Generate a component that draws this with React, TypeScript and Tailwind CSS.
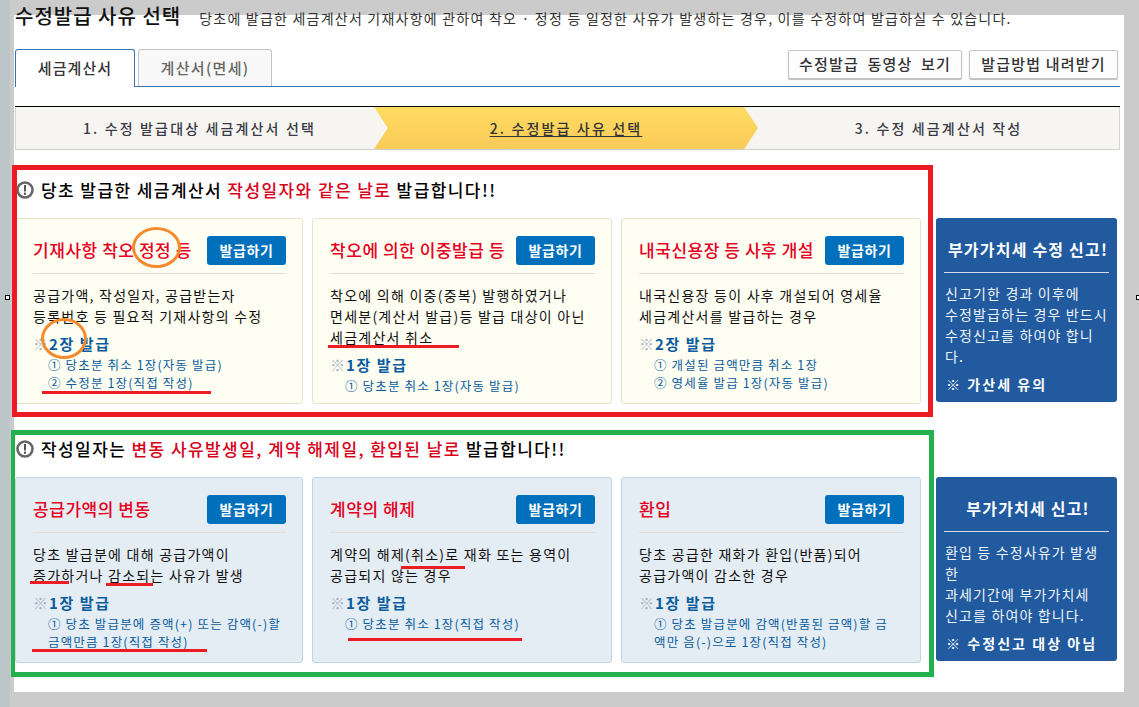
import React from "react";

const font = "font-['Noto_Sans_CJK_KR','Noto_Sans',sans-serif]";

function Alert() {
  return (
    <svg width="18" height="18" viewBox="0 0 18 18" className="shrink-0">
      <circle cx="9" cy="9" r="7.5" fill="#fff" stroke="#666" strokeWidth="2.6" />
      <rect x="8" y="4" width="2" height="6.5" fill="#555" />
      <rect x="8" y="11.6" width="2" height="2.2" fill="#555" />
    </svg>
  );
}

type CardProps = {
  tone: "y" | "b";
  title: string;
  desc: string[];
  count: string;
  subs: string[];
  width: string;
};

function Card({ tone, title, desc, count, subs, width }: CardProps) {
  return (
    <div
      className={`${width} h-[186px] shrink-0 rounded-[3px] border pl-[17px] pr-[16px] pt-[17px] ${
        tone === "y" ? "border-[#e6e4cc] bg-[#fffef2]" : "border-[#c0d5e8] bg-[#e4ecf4]"
      }`}
    >
      <div className="flex h-[38px] items-start justify-between border-b border-[#dfdfd8] pb-[9px]">
        <span className="whitespace-nowrap pt-[1px] text-[17px] leading-[26px] font-medium tracking-[0.55px] text-[#e60022]">{title}</span>
        <span className="flex h-[29px] w-[79px] shrink-0 items-center justify-center rounded-[3px] bg-[#0070bc] text-[14px] font-bold tracking-[0.6px] text-white">
          발급하기
        </span>
      </div>
      <div className="mt-[11px] text-[14px] leading-[21px] tracking-[1.25px] whitespace-nowrap text-[#111]">
        {desc.map((d) => (
          <div key={d}>{d}</div>
        ))}
      </div>
      <div className="mt-[7px] flex h-[21px] items-center whitespace-nowrap text-[15px] font-bold tracking-[1.6px] text-[#0a5c9e]">
        <span className="w-[16px] text-[15px] font-normal tracking-normal text-[#a4b3c4]">※</span>
        <span>{count}</span>
      </div>
      <div className="mt-[1px] pl-[15px] text-[12.5px] leading-[18px] tracking-[1.15px] whitespace-nowrap text-[#0a5c9e]">
        {subs.map((s) => (
          <div key={s}>{s}</div>
        ))}
      </div>
    </div>
  );
}

function Side({ title, lines, foot }: { title: string; lines: string[]; foot: string }) {
  return (
    <div className="ml-[6px] h-[184px] w-[181px] shrink-0 rounded-[3px] bg-[#215a9e] px-[8px] pt-[16px] text-white">
      <div className="h-[39px] border-b border-[#d5dfea] pl-[3px] text-center text-[16px] leading-[30px] font-semibold tracking-[1.2px] whitespace-nowrap">
        {title}
      </div>
      <div className="mt-[10px] pl-px text-[14px] leading-[21px] tracking-[1.15px] whitespace-nowrap text-[#eef3f9]">
        {lines.map((l) => (
          <div key={l}>{l}</div>
        ))}
      </div>
      <div className="mt-[7px] pl-[2px] text-[14px] leading-[21px] font-bold tracking-[2.05px] whitespace-nowrap">{foot}</div>
    </div>
  );
}

export default function App() {
  return (
    <div className={`${font} relative flex h-[707px] w-[1139px] overflow-hidden bg-[#cbcbcb]`}>
      <div className="h-full w-[10px] shrink-0 bg-[#bcc5c8]" />
      <div className="ml-[4px] mt-[15px] h-[677px] w-[1110px] shrink-0 bg-white pl-px">
        {/* title */}
        <div className="-mt-[13px] flex h-[28px] items-center whitespace-nowrap">
          <h1 className="text-[20px] leading-[28px] font-medium tracking-[1px] text-[#111]">수정발급 사유 선택</h1>
          <p className="ml-[18px] pt-[4px] text-[14px] leading-[20px] tracking-[1.22px] text-[#333]">
            당초에 발급한 세금계산서 기재사항에 관하여 착오 · 정정 등 일정한 사유가 발생하는 경우, 이를 수정하여 발급하실 수 있습니다.
          </p>
        </div>

        {/* tabs */}
        <div className="mt-[19px] flex h-[38px] w-[1105px] items-start border-b border-[#3a74b8]">
          <div className="flex h-[38px] w-[120px] items-center justify-center rounded-t-[3px] border border-b-0 border-[#3a74b8] bg-white text-[15px] font-medium tracking-[1.1px] text-[#333]">
            세금계산서
          </div>
          <div className="ml-[3px] flex h-[37px] w-[134px] items-center justify-center rounded-t-[3px] border border-b-0 border-[#c4c4c4] bg-[#f8f8f8] text-[15px] font-medium tracking-[1.3px] text-[#666]">
            계산서(면세)
          </div>
          <div className="ml-auto mt-[1px] flex gap-[7px] pr-[2px]">
            <div className="flex h-[29px] w-[174px] items-center justify-center rounded-[2px] border border-[#c4c4c4] bg-[#fdfdfd] text-[15px] font-medium tracking-[1.2px] [word-spacing:4px] text-[#333] shadow-[0_1px_1px_#bbb]">
              수정발급 동영상 보기
            </div>
            <div className="flex h-[29px] w-[149px] items-center justify-center rounded-[2px] border border-[#c4c4c4] bg-[#fdfdfd] text-[15px] font-medium tracking-[1.2px] text-[#333] shadow-[0_1px_1px_#bbb]">
              발급방법 내려받기
            </div>
          </div>
        </div>

        {/* steps */}
        <div className="mt-[19px] flex h-[44px] w-[1105px] items-stretch border-t border-b border-t-black border-b-[#cfcfcf] bg-[#f6f5f2] text-[14px] font-medium tracking-[2.15px] text-[#3a3a44]">
          <div className="flex w-[359px] shrink-0 items-center justify-center border-l border-[#d4d4d4] pl-[9px]">
            1. 수정 발급대상 세금계산서 선택
          </div>
          <div className="flex w-[384px] shrink-0 items-center justify-center bg-[linear-gradient(#ffdc62,#f9ca58)] [clip-path:polygon(0_0,96.4%_0,100%_50%,96.4%_100%,0_100%,3.6%_50%)] text-[#333] underline underline-offset-2">
            2. 수정발급 사유 선택
          </div>
          <div className="flex flex-1 items-center justify-center border-r border-[#d4d4d4]">
            3. 수정 세금계산서 작성
          </div>
        </div>

        {/* group 1 */}
        <div className="mt-[28px] flex h-[24px] items-center gap-[7px] pl-[1px] text-[17px] font-medium tracking-[1.42px] whitespace-nowrap text-black">
          <Alert />
          <span>
            당초 발급한 세금계산서 <span className="text-[#d9001b]">작성일자와 같은 날로</span> 발급합니다!!
          </span>
        </div>
        <div className="mt-[16px] flex gap-[9px]">
          <Card
            tone="y"
            width="w-[288px]"
            title="기재사항 착오 정정 등"
            desc={["공급가액, 작성일자, 공급받는자", "등록번호 등 필요적 기재사항의 수정"]}
            count="2장 발급"
            subs={["① 당초분 취소 1장(자동 발급)", "② 수정분 1장(직접 작성)"]}
          />
          <Card
            tone="y"
            width="w-[300px]"
            title="착오에 의한 이중발급 등"
            desc={["착오에 의해 이중(중복) 발행하였거나", "면세분(계산서 발급)등 발급 대상이 아닌", "세금계산서 취소"]}
            count="1장 발급"
            subs={["① 당초분 취소 1장(자동 발급)"]}
          />
          <Card
            tone="y"
            width="w-[300px]"
            title="내국신용장 등 사후 개설"
            desc={["내국신용장 등이 사후 개설되어 영세율", "세금계산서를 발급하는 경우"]}
            count="2장 발급"
            subs={["① 개설된 금액만큼 취소 1장", "② 영세율 발급 1장(자동 발급)"]}
          />
          <Side
            title="부가가치세 수정 신고!"
            lines={["신고기한 경과 이후에", "수정발급하는 경우 반드시", "수정신고를 하여야 합니", "다."]}
            foot="※ 가산세 유의"
          />
        </div>

        {/* group 2 */}
        <div className="mt-[33px] flex h-[24px] items-center gap-[7px] pl-[1px] text-[17px] font-medium tracking-[1.42px] whitespace-nowrap text-black">
          <Alert />
          <span>
            작성일자는 <span className="text-[#d9001b]">변동 사유발생일, 계약 해제일, 환입된 날로</span> 발급합니다!!
          </span>
        </div>
        <div className="mt-[16px] flex gap-[9px]">
          <Card
            tone="b"
            width="w-[288px]"
            title="공급가액의 변동"
            desc={["당초 발급분에 대해 공급가액이", "증가하거나 감소되는 사유가 발생"]}
            count="1장 발급"
            subs={["① 당초 발급분에 증액(+) 또는 감액(-)할", "금액만큼 1장(직접 작성)"]}
          />
          <Card
            tone="b"
            width="w-[300px]"
            title="계약의 해제"
            desc={["계약의 해제(취소)로 재화 또는 용역이", "공급되지 않는 경우"]}
            count="1장 발급"
            subs={["① 당초분 취소 1장(직접 작성)"]}
          />
          <Card
            tone="b"
            width="w-[300px]"
            title="환입"
            desc={["당초 공급한 재화가 환입(반품)되어", "공급가액이 감소한 경우"]}
            count="1장 발급"
            subs={["① 당초 발급분에 감액(반품된 금액)할 금", "액만 음(-)으로 1장(직접 작성)"]}
          />
          <Side
            title="부가가치세 신고!"
            lines={["환입 등 수정사유가 발생", "한", "과세기간에 부가가치세", "신고를 하여야 합니다."]}
            foot="※ 수정신고 대상 아님"
          />
        </div>
      </div>

      {/* hand-drawn annotations lying over the page */}
      <div className="absolute left-[12px] top-[165px] h-[252px] w-[921px] border-[5px] border-[#ed1c24]" />
      <div className="absolute left-[11px] top-[430px] h-[247px] w-[923px] border-[5px] border-l-[4px] border-[#22b14c]" />
      <div className="absolute left-[132px] top-[227px] h-[41px] w-[49px] rounded-[50%] border-[3px] border-[#f58a2c]" />
      <div className="absolute left-[41px] top-[318px] h-[41px] w-[46px] rounded-[50%] border-[3px] border-[#f58a2c]" />
      <div className="absolute left-[42px] top-[391px] h-[3px] w-[169px] bg-[#ed1c24]" />
      <div className="absolute left-[328px] top-[345px] h-[3px] w-[131px] bg-[#ed1c24]" />
      <div className="absolute left-[30px] top-[581px] h-[3px] w-[39px] bg-[#ed1c24]" />
      <div className="absolute left-[106px] top-[583px] h-[3px] w-[47px] bg-[#ed1c24]" />
      <div className="absolute left-[32px] top-[649px] h-[3px] w-[175px] bg-[#ed1c24]" />
      <div className="absolute left-[401px] top-[566px] h-[3px] w-[64px] bg-[#ed1c24]" />
      <div className="absolute left-[348px] top-[638px] h-[3px] w-[174px] bg-[#ed1c24]" />
      <div className="absolute left-[5px] top-[295px] h-[5px] w-[5px] border border-black bg-white" />
      <div className="absolute left-[1136px] top-[295px] h-[5px] w-[5px] border border-black bg-white" />
    </div>
  );
}
